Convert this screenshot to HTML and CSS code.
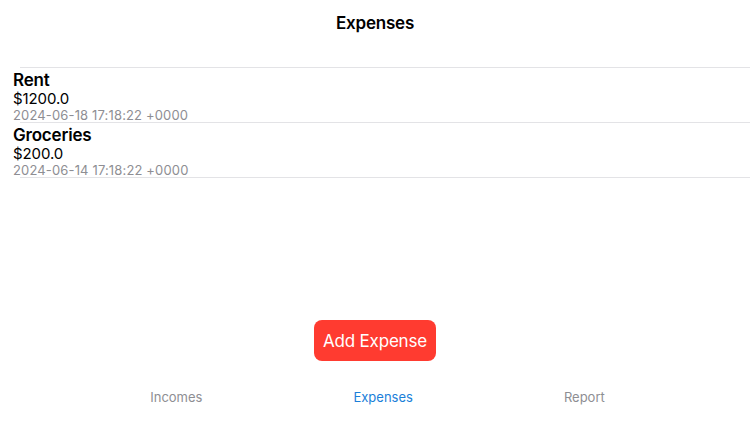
FILE: index.html
```html
<!DOCTYPE html>
<html>
<head>
<meta charset="utf-8">
<link rel="stylesheet" href="styles.css">
</head>
<body>
<div class="app">
  <header class="nav"><h1 class="nav-title">Expenses</h1></header>
  <ul class="list">
    <li class="row">
      <div class="row-name">Rent</div>
      <div class="row-amount">$1200.0</div>
      <div class="row-date">2024-06-18 17:18:22 +0000</div>
    </li>
    <li class="row">
      <div class="row-name">Groceries</div>
      <div class="row-amount">$200.0</div>
      <div class="row-date">2024-06-14 17:18:22 +0000</div>
    </li>
  </ul>
  <div class="actions"><button class="add-btn">Add Expense</button></div>
  <nav class="tabbar">
    <span class="tab">Incomes</span>
    <span class="tab active">Expenses</span>
    <span class="tab">Report</span>
  </nav>
</div>
</body>
</html>
```

FILE: styles.css
```css
* { box-sizing: border-box; }
html, body { margin: 0; padding: 0; background: #fff; }
body { font-family: Inter, "Noto Sans", sans-serif; color: #000; }
.app { width: 750px; height: 422px; display: flex; flex-direction: column; }
.nav { height: 45px; display: flex; align-items: center; justify-content: center; }
.nav-title { margin: 0; font-size: 17px; font-weight: 600; letter-spacing: -0.2px; }
.list { list-style: none; margin: 22px 0 0 0; padding: 0; flex: 1; }
.row { margin-left: 20px; border-top: 1px solid #e3e3e6; padding: 2px 0 0 0; height: 55px; }
.row:last-child { border-bottom: 1px solid #e3e3e6; height: 56px; }
.row-name, .row-amount, .row-date { margin-left: -7px; }
.row-name { font-size: 17px; font-weight: 600; line-height: 20px; letter-spacing: -0.2px; }
.row-amount { font-size: 15px; line-height: 18px; letter-spacing: -0.1px; }
.row-date { font-size: 13px; line-height: 15px; color: #8e8e93; letter-spacing: 0.15px; }
.actions { display: flex; justify-content: center; }
.add-btn { font-family: inherit; background: #ff3b30; color: #fff; border: none; border-radius: 8px; width: 122px; height: 41px; font-size: 17px; letter-spacing: -0.2px; padding: 0; }
.tabbar { height: 61px; display: flex; justify-content: center; align-items: center; gap: 151px; padding: 11px 0 0 5px; }
.tab { font-size: 13px; color: #8e8e93; }
.tab.active { color: #1b7fd9; }
```
